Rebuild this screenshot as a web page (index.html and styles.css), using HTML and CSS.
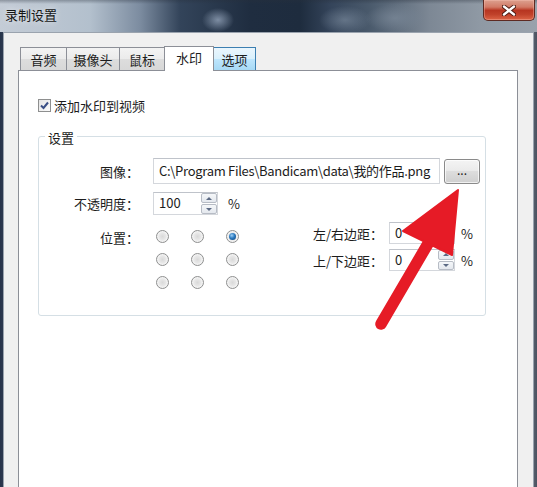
FILE: index.html
```html
<!DOCTYPE html>
<html lang="zh-CN">
<head>
<meta charset="utf-8">
<title>录制设置</title>
<link rel="stylesheet" href="styles.css">
</head>
<body>
<div class="window">
  <div class="titlebar">
    <span class="title">录制设置</span>
    <div class="close">
      <svg width="14" height="11" viewBox="0 0 14 11">
        <path d="M2 1.5 L12 9.5 M12 1.5 L2 9.5" stroke="#4a1a12" stroke-width="4.2" stroke-linecap="round"/>
        <path d="M2 1.5 L12 9.5 M12 1.5 L2 9.5" stroke="#ffffff" stroke-width="2.4" stroke-linecap="round"/>
      </svg>
    </div>
  </div>
  <div class="frame">
    <div class="client">
      <div class="tabs">
        <div class="tab t1">音频</div>
        <div class="tab t2">摄像头</div>
        <div class="tab t3">鼠标</div>
        <div class="tab t4 active">水印</div>
        <div class="tab t5 hover">选项</div>
      </div>
      <div class="panel">
        <div class="check-row">
          <span class="checkbox">
            <svg width="11" height="11" viewBox="0 0 11 11"><path d="M2 5.5 L4.5 8 L9 2.5" fill="none" stroke="#3a4f86" stroke-width="2"/></svg>
          </span>
          <span>添加水印到视频</span>
        </div>
        <fieldset class="group">
          <legend>设置</legend>
          <div class="row row-image">
            <span class="label">图像：</span>
            <div class="textbox wide">C:\Program Files\Bandicam\data\我的作品.png</div>
            <div class="btn">...</div>
          </div>
          <div class="row row-opacity">
            <span class="label">不透明度：</span>
            <div class="spin s-opacity">
              <span class="spin-text">100</span>
              <span class="spinner"><span class="up"></span><span class="down"></span></span>
            </div>
            <span class="pct">%</span>
          </div>
          <div class="row row-pos">
            <span class="label pos-label">位置：</span>
            <div class="radios">
              <span class="radio"></span><span class="radio"></span><span class="radio on"></span>
              <span class="radio"></span><span class="radio"></span><span class="radio"></span>
              <span class="radio"></span><span class="radio"></span><span class="radio"></span>
            </div>
            <div class="margins">
              <div class="mrow">
                <span class="mlabel">左/右边距：</span>
                <div class="spin s-margin">
                  <span class="spin-text">0</span>
                  <span class="spinner"><span class="up"></span><span class="down"></span></span>
                </div>
                <span class="pct2">%</span>
              </div>
              <div class="mrow">
                <span class="mlabel">上/下边距：</span>
                <div class="spin s-margin">
                  <span class="spin-text">0</span>
                  <span class="spinner"><span class="up"></span><span class="down"></span></span>
                </div>
                <span class="pct2">%</span>
              </div>
            </div>
          </div>
        </fieldset>
      </div>
    </div>
  </div>
  <svg class="arrow" width="537" height="487" viewBox="0 0 537 487">
    <line x1="381" y1="324" x2="429" y2="242" stroke="#e61b26" stroke-width="11.5" stroke-linecap="round"/>
    <polygon points="458,190 403,231 452,255" fill="#e61b26" stroke="#e61b26" stroke-width="2" stroke-linejoin="round"/>
  </svg>
</div>
</body>
</html>
```

FILE: styles.css
```css
* { box-sizing: border-box; }
html, body { margin: 0; padding: 0; }
body {
  width: 537px;
  height: 487px;
  overflow: hidden;
  background: #1f2b3d;
  font-family: "Noto Sans CJK SC", "Noto Sans", sans-serif;
  font-size: 13px;
  color: #1c1c1c;
}
.window {
  position: relative;
  width: 537px;
  height: 487px;
  display: flex;
  flex-direction: column;
}
.titlebar {
  height: 32px;
  flex: none;
  display: flex;
  justify-content: space-between;
  align-items: flex-start;
  background:
    radial-gradient(ellipse 16px 12px at 218px 20px, rgba(140,156,178,0.85), rgba(140,156,178,0)),
    radial-gradient(ellipse 26px 14px at 345px 20px, rgba(110,126,145,0.8), rgba(110,126,145,0)),
    radial-gradient(ellipse 30px 14px at 395px 18px, rgba(120,134,150,0.8), rgba(120,134,150,0)),
    linear-gradient(to bottom, rgba(40,48,60,0.35) 0px, rgba(40,48,60,0) 4px),
    linear-gradient(to right, #c4ccd6 0px, #b3c0cd 90px, #7c8ca0 140px, #33445a 180px, #1f2d40 250px, #1e2c3e 300px, #34445a 330px, #4a5a6c 370px, #7d8895 430px, #8f99a4 480px, #99a2ac 537px);
}
.title {
  margin: 6px 0 0 5px;
  line-height: 18px;
  font-size: 13px;
  color: #151515;
  text-shadow: 0 0 6px rgba(255,255,255,0.7);
}
.close {
  width: 52px;
  height: 21px;
  margin-right: 2px;
  border: 1px solid #5e2a22;
  border-top: none;
  border-radius: 0 0 5px 5px;
  background: linear-gradient(to bottom, #dca08f 0%, #d27a66 35%, #b73521 52%, #c0412a 72%, #dc6446 100%);
  box-shadow: inset 0 0 0 1px rgba(255,200,190,0.35);
  display: flex;
  align-items: center;
  justify-content: center;
}
.frame {
  flex: 1;
  display: flex;
  padding: 0 3px;
  background: linear-gradient(to right, #26334a 0px, #2c394f 3px, #555d6a 534px, #4b5361 537px);
}
.client {
  flex: 1;
  display: flex;
  flex-direction: column;
  background: #f0f0f0;
  border: 1px solid #9aa3ae;
  border-bottom: none;
  padding: 13px 15px 0 14px;
}
.tabs {
  display: flex;
  align-items: flex-end;
  padding-left: 2px;
}
.tab {
  height: 23px;
  margin-right: -1px;
  border: 1px solid #8c8f97;
  border-bottom: none;
  background: linear-gradient(to bottom, #f3f3f3 0%, #ebebeb 50%, #dddddd 51%, #d8d8d8 100%);
  text-align: center;
  padding-top: 3px;
  line-height: 17px;
}
.t1 { width: 47px; }
.t2 { width: 54px; }
.t3 { width: 46px; }
.t4 { width: 50px; }
.t5 { width: 43px; }
.tab.active {
  height: 25px;
  margin-bottom: -1px;
  background: #ffffff;
  position: relative;
  z-index: 2;
  padding-top: 2px;
}
.tab.hover {
  background: linear-gradient(to bottom, #eaf6fd 0%, #d9f0fc 50%, #bee6fd 51%, #a7d9f5 100%);
  border-color: #3c7fb1;
  position: relative;
  z-index: 1;
}
.panel {
  flex: 1;
  background: #ffffff;
  border: 1px solid #8c8f97;
  border-bottom: none;
  padding: 26px 0 0 19px;
}
.check-row {
  display: flex;
  align-items: center;
  height: 17px;
  line-height: 17px;
}
.checkbox {
  width: 13px;
  height: 13px;
  margin-right: 3px;
  border: 1px solid #8e8f8f;
  background: linear-gradient(135deg, #e4e4e4 0%, #fbfbfb 100%);
  display: flex;
  align-items: center;
  justify-content: center;
}
.group {
  margin: 13px 0 0 0;
  width: 448px;
  padding: 13px 0 26px 0;
  border: 1px solid #d5dfe5;
  border-radius: 3px;
  min-width: 0;
}
.group legend {
  margin-left: 6px;
  padding: 4px 3px 0 3px;
  line-height: 14px;
}
.row {
  display: flex;
  align-items: center;
  gap: 14px;
}
.label {
  width: 100px;
  text-align: right;
  line-height: 17px;
  flex: none;
}
.row-opacity { margin-top: 8px; }
.row-pos { margin-top: 7px; align-items: flex-start; }
.pos-label { padding-top: 7px; }
.textbox {
  height: 26px;
  border: 1px solid #d4d7dc;
  border-top-color: #bfc3ca;
  background: #ffffff;
  padding-left: 5px;
  line-height: 24px;
  white-space: nowrap;
  overflow: hidden;
  letter-spacing: -0.3px;
}
.wide { width: 287px; }
.row-image .btn { margin-left: -10px; }
.btn {
  width: 36px;
  height: 25px;
  border: 1px solid #8a8a8a;
  border-radius: 3px;
  background: linear-gradient(to bottom, #f4f4f4 0%, #ebebeb 45%, #dddddd 50%, #cfcfcf 100%);
  box-shadow: inset 0 0 0 1px rgba(255,255,255,0.7);
  text-align: center;
  line-height: 20px;
  font-size: 12px;
}
.spin {
  display: flex;
  border: 1px solid #d4d7dc;
  border-top-color: #bfc3ca;
  background: #ffffff;
}
.s-opacity { width: 65px; height: 23px; }
.s-margin { width: 66px; height: 22px; }
.spin-text {
  flex: 1;
  padding-left: 5px;
  line-height: 20px;
}
.spinner {
  width: 16px;
  display: flex;
  flex-direction: column;
  gap: 1px;
}
.up, .down {
  flex: 1;
  border: 1px solid #b7bcc5;
  border-radius: 2px;
  background: linear-gradient(to bottom, #f5f7f9 0%, #e4e8ee 100%);
  display: flex;
  align-items: center;
  justify-content: center;
}
.up::after {
  content: "";
  border-left: 3px solid transparent;
  border-right: 3px solid transparent;
  border-bottom: 3px solid #5c6a84;
}
.down::after {
  content: "";
  border-left: 3px solid transparent;
  border-right: 3px solid transparent;
  border-top: 3px solid #5c6a84;
}
.pct { margin-left: -4px; line-height: 17px; }
.radios {
  display: grid;
  grid-template-columns: repeat(3, 13px);
  column-gap: 22px;
  row-gap: 10px;
  margin-left: 3px;
  padding-top: 8px;
}
.radio {
  width: 13px;
  height: 13px;
  border-radius: 50%;
  border: 1px solid #8e8f8f;
  background: radial-gradient(circle at 50% 50%, #d9d9d9 0%, #e8e8e8 45%, #f6f6f6 70%, #ffffff 100%);
  box-shadow: inset 0 0 0 1px #f2f2f2;
  display: flex;
  align-items: center;
  justify-content: center;
}
.radio.on::after {
  content: "";
  width: 7px;
  height: 7px;
  border-radius: 50%;
  background: radial-gradient(circle at 40% 35%, #9fd0f5 0%, #2a79bf 45%, #0f3f73 100%);
}
.margins {
  margin-left: 60px;
  display: flex;
  flex-direction: column;
  gap: 5px;
}
.mrow {
  display: flex;
  align-items: center;
}
.mlabel {
  width: 76px;
  line-height: 17px;
}
.pct2 { margin-left: 6px; line-height: 17px; }
.arrow {
  position: absolute;
  left: 0;
  top: 0;
  pointer-events: none;
  z-index: 5;
}
```
